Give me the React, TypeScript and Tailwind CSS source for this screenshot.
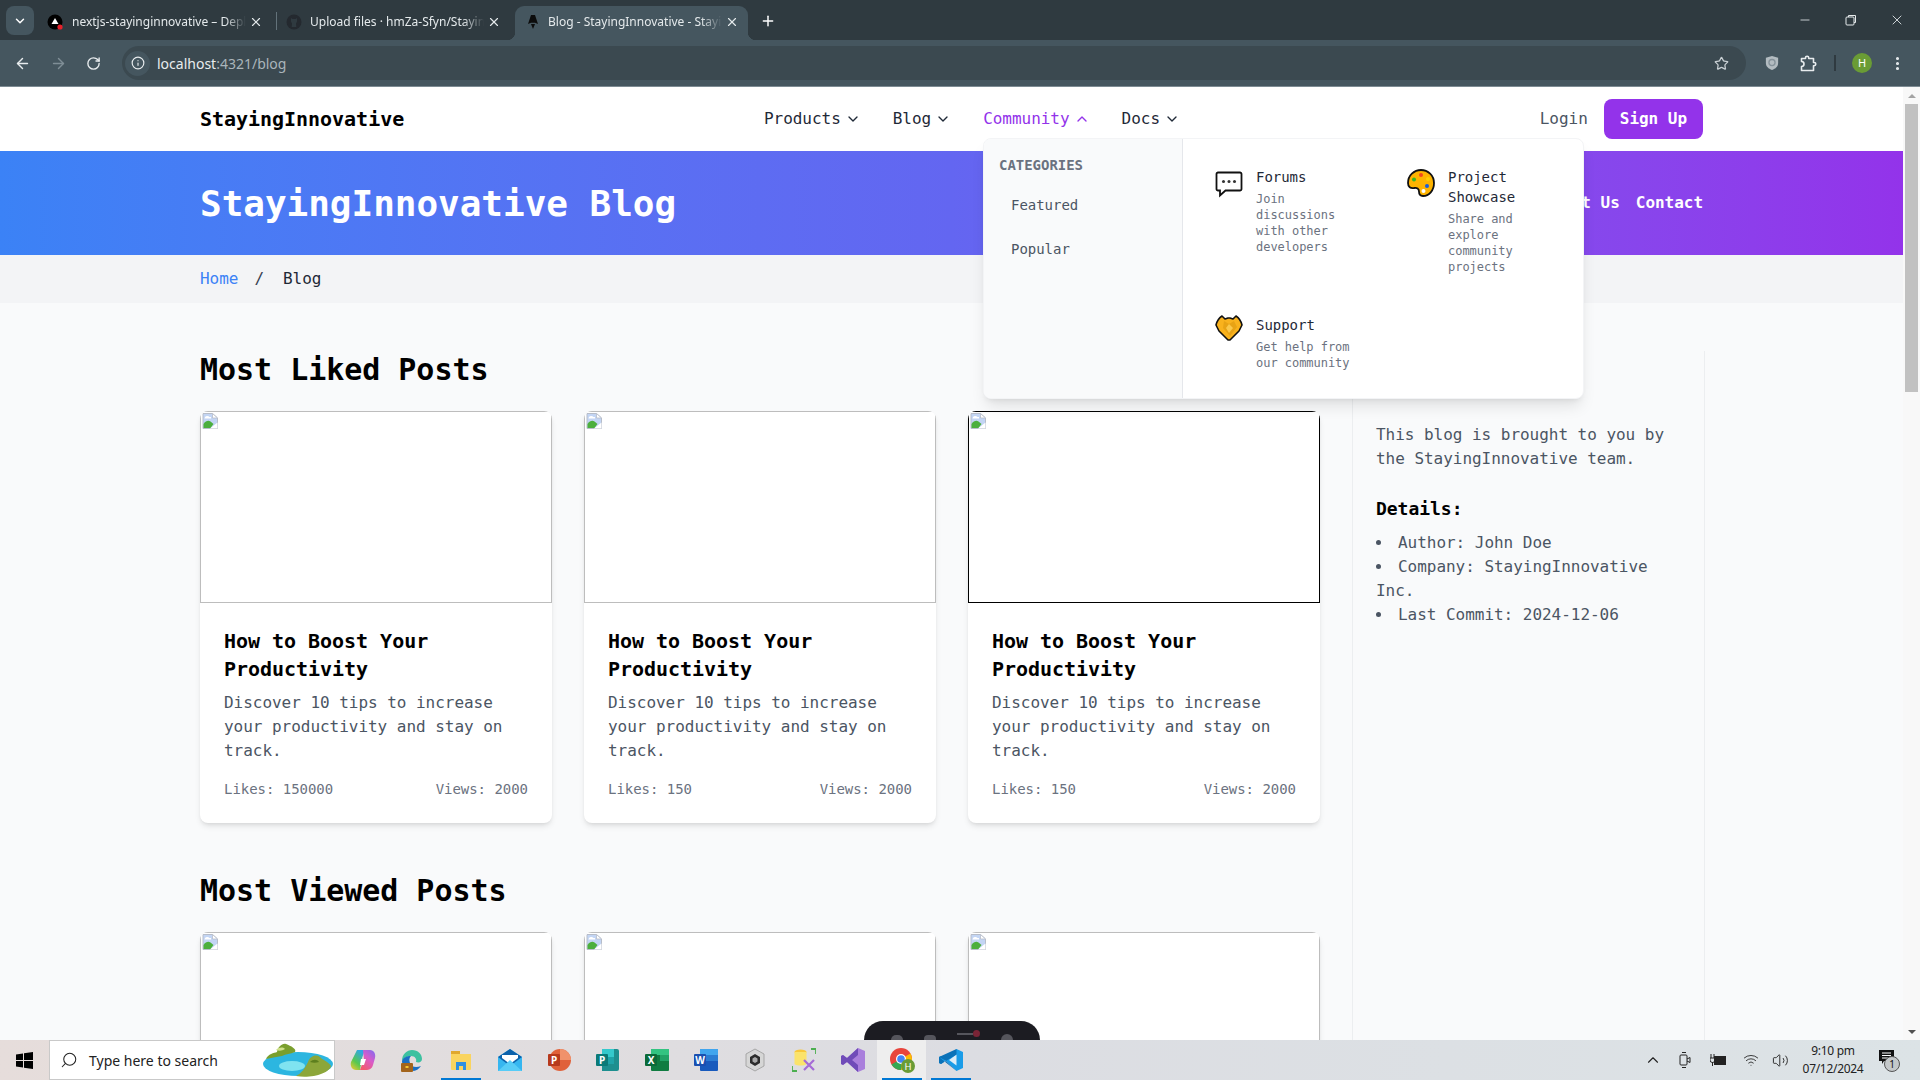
import React from "react";
import { ArrowLeft, ArrowRight, RotateCw, Info, Star, EllipsisVertical, ChevronDown, ChevronUp, Minus, X, Plus, Search, Volume2, Wifi } from "lucide-react";

const UI = "font-['Noto_Sans',sans-serif]";

function Tab({ w, pl, ml, pr, active, icon, title }: { w: string; pl: string; ml: string; pr: string; active?: boolean; icon: React.ReactNode; title: string }) {
  return (
    <div className={`relative h-[34px] pb-[3px] flex items-center ${w} ${pl} ${pr} ${active ? "bg-[#45565f] rounded-t-[9px]" : ""}`}>
      {icon}
      <div className={`${ml} flex-1 overflow-hidden whitespace-nowrap text-[12px] text-[#e4e9eb] [mask-image:linear-gradient(to_right,black_88%,transparent)]`}>{title}</div>
      <X size={14} className="text-[#e4e9eb] ml-[3px] mr-[1px] shrink-0" strokeWidth={2} />
      {active && <div className="absolute left-[-8px] bottom-0 w-2 h-2 bg-[radial-gradient(circle_at_0_0,transparent_8px,#45565f_8.5px)]" />}
      {active && <div className="absolute right-[-8px] bottom-0 w-2 h-2 bg-[radial-gradient(circle_at_100%_0,transparent_8px,#45565f_8.5px)]" />}
    </div>
  );
}

function BrowserChrome() {
  return (
    <div className={`${UI} shrink-0`}>
      <div className="h-[40px] bg-[#2f3a40] flex items-end">
        <div className="w-[28px] h-[29px] ml-[6px] mb-[5px] mr-[6px] rounded-lg bg-[#45565f] flex items-center justify-center">
          <ChevronDown size={14} className="text-white" strokeWidth={2.5} />
        </div>
        <Tab w="w-[236px]" pl="pl-[7px]" ml="ml-[9px]" pr="pr-[12px]" title="nextjs-stayinginnovative – Deployment" icon={
          <svg width="16" height="16" viewBox="0 0 16 16" className="shrink-0"><circle cx="8" cy="8" r="7.5" fill="#000" /><path d="M8 4l3.5 6h-7z" fill="#fff" /><circle cx="13" cy="13" r="2.6" fill="#e5212b" /></svg>
        } />
        <div className="w-px h-[18px] bg-[#63727a] mb-[10px]" />
        <Tab w="w-[238px]" pl="pl-[9px]" ml="ml-[8px]" pr="pr-[13px]" title="Upload files · hmZa-Sfyn/StayingInnovative" icon={
          <svg width="16" height="16" viewBox="0 0 16 16" className="shrink-0"><circle cx="8" cy="8" r="7.5" fill="#24292f" /><path d="M5 4l1.5 1h3L11 4v3.5l-1 2 .3 3.5H5.7L6 9.500l-1-2z" fill="#2f3a40" /></svg>
        } />
        <Tab active w="w-[233px]" pl="pl-[10px]" ml="ml-[7px]" pr="pr-[8px]" title="Blog - StayingInnovative - Staying" icon={
          <svg width="16" height="16" viewBox="0 0 16 16" className="shrink-0"><path d="M6 1h4l3 9-3-1.200H6L3 10z" fill="#0c0c0c" /><path d="M6 10h4l-2 5z" fill="#0c0c0c" /></svg>
        } />
        <Plus size={16} className="text-white ml-[12px] mb-[11px]" strokeWidth={2.2} />
        <div className="flex-1" />
        <div className="flex items-center h-full pb-[1px] text-[#e6eaec]">
          <div className="w-[46px] flex justify-center"><Minus size={14} strokeWidth={1.4} /></div>
          <div className="w-[46px] flex justify-center">
            <svg width="12" height="12" viewBox="0 0 12 12" fill="none" stroke="currentColor"><rect x="1" y="3" width="8" height="8" rx="1" /><path d="M3.500 3V1.500h7v7H9" /></svg>
          </div>
          <div className="w-[46px] flex justify-center"><X size={16} strokeWidth={1.3} /></div>
        </div>
      </div>
      <div className="h-[47px] bg-[#45565f] border-b border-[#7d8b93] flex items-center text-[#e8ecee]">
        <ArrowLeft size={17} className="ml-[14px]" strokeWidth={2} />
        <ArrowRight size={17} className="ml-[19px] text-[#7f8e96]" strokeWidth={2} />
        <RotateCw size={15} className="ml-[19px]" strokeWidth={2.2} />
        <div className="ml-[21px] w-[1624px] h-[34px] rounded-full bg-[#3b4950] flex items-center pl-[3px] pr-[17px]">
          <div className="w-[25px] h-[25px] rounded-full bg-[#45565f] flex items-center justify-center"><Info size={14} strokeWidth={2} /></div>
          <span className="ml-[7px] text-[14px] text-[#e8ecee]">localhost<span className="text-[#aab5bb]">:4321/blog</span></span>
          <div className="flex-1" />
          <Star size={15} className="text-[#c9d0d4]" strokeWidth={2} />
        </div>
        <svg width="14" height="16" viewBox="0 0 16 18" className="ml-[19px]"><path d="M8 1l7 2v6c0 4-3 6.500-7 8-4-1.500-7-4-7-8V3z" fill="#b3bcc1" /><circle cx="8" cy="8.500" r="3.500" fill="none" stroke="#85929a" strokeWidth="1.500" /></svg>
        <svg width="17" height="17" viewBox="0 0 17 17" fill="none" stroke="currentColor" strokeWidth="1.600" strokeLinejoin="round" className="ml-[21px]">
          <path d="M1.500 3.500h4V2.800a1.600 1.600 0 013.200 0v.7h4.800v4h.7a1.600 1.600 0 010 3.200h-.7v4.800h-12v-4a2.500 2.500 0 000-5z" />
        </svg>
        <div className="ml-[17px] w-[2px] h-[16px] bg-[#2f3a40]" />
        <div className="ml-[16px] w-5 h-5 rounded-full bg-[#6a9c35] flex items-center justify-center text-[11px] text-white">H</div>
        <EllipsisVertical size={17} className="ml-[17px]" strokeWidth={2.4} />
      </div>
    </div>
  );
}

function BrokenImg() {
  return (
    <svg width="16" height="16" viewBox="0 0 16 16" className="block m-px">
      <path d="M1 0.500h9.500L15.500 5v10.500H1z" fill="#c3d5f4" stroke="#b7bdc9" strokeWidth="1" />
      <path d="M10.500 .5V5h5z" fill="#fff" stroke="#b7bdc9" strokeWidth=".8" />
      <path d="M3 4c1-1.500 3.500-1.500 4.500 0H9v1.500H2.500z" fill="#fff" />
      <path d="M1.500 15V11c2-3 5-4 7-2.500l3 2.500-3 4z" fill="#4caf3d" />
      <path d="M8 15.500l7.500-6v6z" fill="#fff" />
    </svg>
  );
}

function Card({ likes, dark }: { likes: string; dark?: boolean }) {
  return (
    <div className="bg-white rounded-lg shadow-md overflow-hidden">
      <div className={`h-[192px] border ${dark ? "border-black" : "border-[#bdbdbd]"}`}>
        <BrokenImg />
      </div>
      <div className="p-6">
        <h3 className="text-[20px] leading-[28px] font-bold text-black mb-2">How to Boost Your Productivity</h3>
        <p className="text-[16px] leading-[24px] text-[#4b5563]">Discover 10 tips to increase your productivity and stay on track.</p>
        <div className="mt-4 flex justify-between text-[14px] leading-[20px] text-[#6b7280]">
          <span>Likes: {likes}</span>
          <span>Views: 2000</span>
        </div>
      </div>
    </div>
  );
}

function NavItem({ label, open }: { label: string; open?: boolean }) {
  return (
    <span className={`flex items-center ${open ? "text-[#9333ea]" : "text-[#1f2937]"}`}>
      {label}
      {open ? <ChevronUp size={16} className="ml-1" strokeWidth={2} /> : <ChevronDown size={16} className="ml-1" strokeWidth={2} />}
    </span>
  );
}

const BubbleIcon = (
  <svg width="28" height="28" viewBox="0 0 28 28" className="shrink-0 mt-[3px]">
    <path d="M3 2.500h22a1.500 1.500 0 011.500 1.500v15a1.500 1.500 0 01-1.500 1.500H10.500L5 25.500v-5H3A1.500 1.500 0 011.500 19V4A1.500 1.500 0 013 2.500z" fill="#fff" stroke="#111" strokeWidth="1.800" />
    <circle cx="8.500" cy="11.500" r="1.500" fill="#333" /><circle cx="14" cy="11.500" r="1.500" fill="#333" /><circle cx="19.500" cy="11.500" r="1.500" fill="#333" />
  </svg>
);
const PaletteIcon = (
  <svg width="28" height="28" viewBox="0 0 28 28" className="shrink-0 mt-[2px]">
    <path d="M14 1c7 0 13 5.500 13 13s-5 13-11 13c-3.500 0-4-2-4-4.500 0-3-2-4-5-3.500C3.500 19.500 1 18 1 14 1 6.500 7 1 14 1z" fill="#fdb300" stroke="#111" strokeWidth="1.800" />
    <circle cx="14" cy="6" r="2" fill="#f0491f" /><circle cx="7" cy="10.500" r="2" fill="#3cb521" /><circle cx="21" cy="10" r="2" fill="#fcd000" /><circle cx="20" cy="17" r="2" fill="#1a5fd9" /><circle cx="16.500" cy="22" r="2" fill="#fff" />
  </svg>
);
const HandsIcon = (
  <svg width="28" height="28" viewBox="0 0 28 28" className="shrink-0 mt-[-2px]">
    <path d="M7 3l3 3 3-1h2l3 1 3-3c3 2 5 5 6 9l-3 6-5 5-4 4h-2l-4-4-5-5-3-6c1-4 3-7 6-9z" fill="#f9b21d" stroke="#111" strokeWidth="1.600" strokeLinejoin="round" />
    <path d="M9 8l5 3 5-3 3 6-7 9-7-8z" fill="#e8a315" />
    <path d="M14 11l4 4-4 5-3-5z" fill="#fbc84a" />
  </svg>
);

function MenuCard({ icon, title, desc }: { icon: React.ReactNode; title: string; desc: string }) {
  return (
    <div className="p-4 flex">
      <div className="w-[41px] shrink-0">{icon}</div>
      <div className="flex-1">
        <div className="text-[14px] leading-[20px] text-[#1f2937]">{title}</div>
        <div className="mt-1 text-[12px] leading-[16px] text-[#6b7280]">{desc}</div>
      </div>
    </div>
  );
}

function Popover() {
  return (
    <div className="absolute left-[983px] top-[51px] w-[601px] h-[261px] bg-white rounded-lg shadow-lg border border-[#f3f4f6] flex overflow-hidden z-10">
      <div className="w-[200px] bg-[#f9fafb] border-r border-[#e5e7eb] px-[15px] py-4">
        <div className="text-[14px] leading-[20px] font-bold text-[#6b7280] uppercase">Categories</div>
        <div className="mt-2 text-[14px] leading-[20px] text-[#4b5563]">
          <div className="px-3 py-3">Featured</div>
          <div className="px-3 py-3">Popular</div>
        </div>
      </div>
      <div className="flex-1 px-4 py-3 grid grid-cols-[176px_176px] gap-x-4 gap-y-2 content-start">
        <MenuCard icon={BubbleIcon} title="Forums" desc="Join discussions with other developers" />
        <MenuCard icon={PaletteIcon} title="Project Showcase" desc="Share and explore community projects" />
        <MenuCard icon={HandsIcon} title="Support" desc="Get help from our community" />
      </div>
    </div>
  );
}

function WebPage() {
  return (
    <div className="w-[1903px] h-full overflow-hidden bg-[#f9fafb] font-['DejaVu_Sans_Mono',monospace] tracking-[-0.002em]">
      <nav className="relative h-[64px] bg-white px-[200px] flex items-center justify-between text-[16px]">
        <div className="text-[20px] font-bold text-black">StayingInnovative</div>
        <div className="flex items-center gap-8">
          <NavItem label="Products" />
          <NavItem label="Blog" />
          <NavItem label="Community" open />
          <NavItem label="Docs" />
        </div>
        <div className="flex items-center gap-4">
          <span className="text-[#4b5563]">Login</span>
          <span className="h-[40px] px-4 rounded-lg bg-[#9333ea] text-white font-bold flex items-center">Sign Up</span>
        </div>
        <Popover />
      </nav>
      <header className="h-[104px] px-[200px] flex items-center justify-between bg-gradient-to-r from-[#3b82f6] via-[#6366f1] to-[#9333ea] text-white">
        <h1 className="text-[36px] leading-[40px] h-[40px] pt-px font-bold">StayingInnovative Blog</h1>
        <div className="flex gap-4 text-[16px] font-bold">
          <span>Contact Us</span>
          <span>Contact</span>
        </div>
      </header>
      <div className="h-[48px] px-[200px] flex items-center bg-[#f3f4f6] text-[16px]">
        <span className="text-[#3b82f6]">Home</span>
        <span className="ml-[16px] mr-[19px] text-[#374151]">/</span>
        <span className="text-[#1f2937]">Blog</span>
      </div>
      <div className="px-[200px] py-12 flex gap-8">
        <main className="w-[1120px] shrink-0">
          <h2 className="text-[30px] leading-[36px] h-[36px] pt-px font-bold text-black mb-6">Most Liked Posts</h2>
          <div className="grid grid-cols-3 gap-8 mb-[49px]">
            <Card likes="150000" />
            <Card likes="150" />
            <Card likes="150" dark />
          </div>
          <h2 className="text-[30px] leading-[36px] h-[36px] pt-px font-bold text-black mb-6">Most Viewed Posts</h2>
          <div className="grid grid-cols-3 gap-8">
            <Card likes="150" />
            <Card likes="150" />
            <Card likes="150" />
          </div>
        </main>
        <aside className="w-[353px] shrink-0 border-l border-r border-[#eceef0] pl-[23px] pr-6 pt-[72px] h-[1000px] text-[16px] leading-[24px] text-[#4b5563]">
          <p>This blog is brought to you by the StayingInnovative team.</p>
          <h3 className="mt-6 text-[18px] leading-[28px] font-bold text-black">Details:</h3>
          <ul className="mt-2 list-disc list-inside">
            <li>Author: John Doe</li>
            <li>Company: StayingInnovative Inc.</li>
            <li>Last Commit: 2024-12-06</li>
          </ul>
        </aside>
      </div>
    </div>
  );
}

function Scrollbar() {
  return (
    <div className="w-[17px] h-full bg-[#f8f8f8] flex flex-col items-center">
      <div className="h-[17px] flex items-center justify-center">
        <div className="w-0 h-0 border-x-[4px] border-x-transparent border-b-[4px] border-b-[#a3a3a3]" />
      </div>
      <div className="w-[13px] h-[288px] bg-[#c1c1c1]" />
      <div className="flex-1" />
      <div className="h-[17px] flex items-center justify-center">
        <div className="w-0 h-0 border-x-[4px] border-x-transparent border-t-[4px] border-t-[#505050]" />
      </div>
    </div>
  );
}

function Slot({ children, active, bar }: { children: React.ReactNode; active?: boolean; bar?: boolean }) {
  return (
    <div className={`relative w-[49px] h-full flex items-center justify-center ${active ? "bg-[#eeeeee]" : ""}`}>
      {children}
      {bar && <div className="absolute bottom-0 left-[4.500px] right-[4.500px] h-[2px] bg-[#0078d4]" />}
    </div>
  );
}

function Taskbar() {
  return (
    <div className={`${UI} relative h-[40px] shrink-0 flex items-center bg-gradient-to-r from-[#e6dddb] via-[#dcdde2] to-[#dce3e6]`}>
      <div className="w-[49px] flex justify-center">
        <svg width="17" height="17" viewBox="0 0 17 17" fill="#000"><path d="M0 2.500L7 1.500v6.500H0zM8 1.300L17 0v8H8zM0 9h7v6.500L0 14.500zM8 9h9v8L8 15.700z" /></svg>
      </div>
      <div className="w-[286px] h-full bg-white border border-[#c9c9c9] flex items-center">
        <Search size={18} className="ml-[10px] -scale-x-100 text-[#222]" strokeWidth={1.400} />
        <span className="ml-[11px] text-[14px] text-[#222]">Type here to search</span>
        <svg width="74" height="36" viewBox="0 0 74 36" className="ml-auto">
          <ellipse cx="38" cy="22" rx="35" ry="12" fill="#2cb6e0" />
          <ellipse cx="32" cy="24" rx="13" ry="5" fill="#7fe3f0" />
          <path d="M6 17c2-5 8-6 11-7 1-5 5-9 9-8 5 2 11 5 9 8-5 2-9 2-13 4-6 1-11 2-16 3z" fill="#7a9f2e" />
          <path d="M16 8c3-3 7-3 9-1-3 2-6 2-9 1z" fill="#cfe08a" />
          <path d="M36 34c6-3 9-8 12-14 2-6 8-8 12-5 2 3 8 4 11 9-1 7-20 13-35 10z" fill="#8ca63a" />
          <path d="M50 20c3-3 7-3 9 0-3 1-6 1-9 0z" fill="#5d7f1e" />
        </svg>
      </div>
      <div className="ml-[3px] flex h-full">
        <Slot><svg width="26" height="26" viewBox="0 0 26 26"><defs><linearGradient id="cpa" x1="0" y1="1" x2=".6" y2="0"><stop offset="0" stopColor="#f9c92f" /><stop offset=".45" stopColor="#58c84f" /><stop offset="1" stopColor="#2fa7e6" /></linearGradient><linearGradient id="cpb" x1=".3" y1="1" x2="1" y2="0"><stop offset="0" stopColor="#f25a6e" /><stop offset=".5" stopColor="#d95bc9" /><stop offset="1" stopColor="#7c6cf2" /></linearGradient></defs><path d="M7 3h8l-3 8-2 12H6c-4 0-6-4-5-8z" fill="url(#cpa)" /><path d="M13 3h7c4 0 6 4 5 8l-2 7c-1 4-4 5-7 5h-6l4-11z" fill="url(#cpb)" /><path d="M11 12h5l-2 6h-4z" fill="#fff" /></svg></Slot>
        <Slot><svg width="24" height="24" viewBox="0 0 24 24"><path d="M2 13C2 6 7 2 12 2c6 0 10 4 10 9 0 3-3 4-6 3 1-3-1-6-5-6-4 0-7 2-9 5z" fill="#3dc1a0" /><path d="M2 13c0 6 5 10 10 10 4 0 7-2 9-5-5 2-10 1-11-3-1-3-1-5 1-7-5 0-8 2-9 5z" fill="#1a6fc4" /><rect x="1" y="15" width="12" height="9" rx="1" fill="#a3641c" /><rect x="5.500" y="18" width="3" height="2" fill="#f4c430" /></svg></Slot>
        <Slot bar><svg width="22" height="20" viewBox="0 0 22 20"><path d="M1 1h9v5H1z" fill="#e0a82e" /><path d="M1 4h20v15a1 1 0 01-1 1H2a1 1 0 01-1-1z" fill="#fad45f" /><path d="M6 12h10v8h-3v-4H9v4H6z" fill="#2f8fe0" /></svg></Slot>
        <Slot><svg width="24" height="22" viewBox="0 0 24 22"><path d="M0 8L12 0l12 8v14H0z" fill="#36b6f0" /><path d="M0 8L12 0l12 8-12 9z" fill="#0d62ab" /><path d="M4 6h16v3l-8 6-8-6z" fill="#fff" /><path d="M0 22l12-11 12 11z" fill="#57ccf7" /></svg></Slot>
        <Slot><svg width="24" height="24" viewBox="0 0 24 24"><circle cx="13" cy="12" r="11" fill="#e0613a" /><path d="M13 1a11 11 0 0111 11H13z" fill="#f0926b" /><rect x="1" y="6" width="12" height="12" rx="1" fill="#b7391d" /><text x="7" y="16" fontSize="10" fontWeight="700" fill="#fff" textAnchor="middle" fontFamily="Noto Sans">P</text></svg></Slot>
        <Slot><svg width="24" height="24" viewBox="0 0 24 24"><path d="M6 1h15a2 2 0 012 2v18a2 2 0 01-2 2H6z" fill="#1d8f8f" /><path d="M6 1h12v8H6z" fill="#35c9cc" /><path d="M6 9h12v7H6z" fill="#1fa3a8" /><rect x="0" y="6" width="12" height="12" rx="1" fill="#0a7a78" /><text x="6" y="16" fontSize="10" fontWeight="700" fill="#fff" textAnchor="middle" fontFamily="Noto Sans">P</text></svg></Slot>
        <Slot><svg width="24" height="24" viewBox="0 0 24 24"><rect x="6" y="1" width="18" height="22" rx="1" fill="#107c41" /><path d="M6 1h18v6H6z" fill="#33c481" /><path d="M15 7h9v6h-9z" fill="#21a366" /><rect x="0" y="6" width="12" height="12" rx="1" fill="#0b6a38" /><text x="6" y="16" fontSize="10" fontWeight="700" fill="#fff" textAnchor="middle" fontFamily="Noto Sans">X</text></svg></Slot>
        <Slot><svg width="24" height="24" viewBox="0 0 24 24"><rect x="6" y="1" width="18" height="22" rx="1" fill="#185abd" /><path d="M6 1h18v6H6z" fill="#41a5ee" /><path d="M6 7h18v6H6z" fill="#2b7cd3" /><rect x="0" y="6" width="12" height="12" rx="1" fill="#1a4fb0" /><text x="6" y="16" fontSize="10" fontWeight="700" fill="#fff" textAnchor="middle" fontFamily="Noto Sans">W</text></svg></Slot>
        <Slot><svg width="20" height="24" viewBox="0 0 20 24"><path d="M10 1l9 5v12l-9 5-9-5V6z" fill="#d6d6d6" stroke="#999" strokeWidth=".8" /><path d="M10 6l5 3v6l-5 3-5-3V9z" fill="#2c2c2c" /><path d="M10 9l2.500 1.500v3L10 15l-2.500-1.500v-3z" fill="#aaa" /></svg></Slot>
        <Slot><svg width="24" height="24" viewBox="0 0 24 24"><ellipse cx="8.500" cy="4" rx="6" ry="2.500" fill="#f8c83a" /><path d="M2.500 4h12v12c-2 2-10 2-12 0z" fill="#fbe36b" /><path d="M0 23v-5M0 23h5M24 1h-5M24 1v5" stroke="#4caf50" strokeWidth="1.800" fill="none" /><path d="M12 22l10-10M12 12l10 10" stroke="#a56bd6" strokeWidth="2.200" /></svg></Slot>
        <Slot><svg width="24" height="24" viewBox="0 0 24 24"><path d="M17 0l7 3v18l-7 3L6 14l-4 3-2-1V8l2-1 4 3z" fill="#a97fdc" /><path d="M17 0v24L6 14l-4 3-2-1V8l2-1 4 3zM17 7l-6 5 6 5z" fill="#6f4bb8" fillRule="evenodd" /></svg></Slot>
        <Slot active bar>
          <svg width="26" height="26" viewBox="0 0 26 26"><circle cx="12" cy="12" r="11" fill="#e8453c" /><path d="M12 12L2.500 17.500A11 11 0 0012 23z" fill="#34a853" /><path d="M12 12l9.500-5.500A11 11 0 0123 12c0 6-5 11-11 11z" fill="#fbbc05" /><circle cx="12" cy="12" r="5" fill="#fff" /><circle cx="12" cy="12" r="3.800" fill="#4285f4" /><circle cx="19" cy="19" r="7" fill="#6a9c35" /><text x="19" y="22.500" fontSize="9.500" fill="#fff" textAnchor="middle" fontFamily="Noto Sans">H</text></svg>
        </Slot>
        <Slot bar><svg width="24" height="24" viewBox="0 0 24 24"><path d="M17.500 1L24 4v16l-6.500 3-11-10.500L2 16l-2-1V9l2-1 4.500 3.500z" fill="#1a9ce8" /><path d="M17.500 6.500L10 12l7.500 5.500z" fill="#f4f6f8" fillOpacity=".9" /><path d="M17.500 1v5.500L2 16l-2-1V9zM0 9l17.500 14-11-10.500z" fill="#0b72b8" /></svg></Slot>
      </div>
      <div className="flex-1" />
      <div className="flex items-center text-[#222] pr-[23px]">
        <ChevronUp size={18} strokeWidth={1.500} />
        <svg width="12" height="18" viewBox="0 0 12 18" fill="none" stroke="#222" strokeWidth="1" className="ml-[17px]"><rect x="1" y="4" width="7" height="10" rx="1" /><path d="M8 8l3-1.500v5L8 10M3 1.500h4M3 16.500h4" /></svg>
        <svg width="16" height="14" viewBox="0 0 16 14" className="ml-[19px]"><rect x="4" y="3" width="12" height="9" fill="#222" /><path d="M1 1v4M4 1v4M0 5h5v2a2 2 0 01-5 0zM2.500 9v4" stroke="#222" strokeWidth="1" fill="none" /></svg>
        <Wifi size={16} strokeWidth={1.300} className="ml-[17px]" />
        <Volume2 size={17} strokeWidth={1.300} className="ml-[13px]" />
        <div className="ml-[12px] w-[64px] text-[12px] leading-[18px] text-center text-[#222] tracking-[-0.3px]">
          <div>9:10 pm</div>
          <div>07/12/2024</div>
        </div>
        <div className="relative ml-[14px] w-[18px] h-[24px]">
          <svg width="15" height="14" viewBox="0 0 15 14" className="absolute left-0 top-[2px]"><path d="M0 0h15v11H5l-2 3v-3H0z" fill="#111" /><path d="M3 3h9M3 5.500h9M3 8h9" stroke="#fff" /></svg>
          <div className="absolute left-[5px] top-[8px] w-[16px] h-[16px] rounded-full bg-[#c4c8ca] border border-[#555] text-[10px] leading-[14px] text-center text-[#111]">1</div>
        </div>
      </div>
    </div>
  );
}

export default function App() {
  return (
    <div className="w-[1920px] h-[1080px] overflow-hidden flex flex-col bg-white">
      <BrowserChrome />
      <div className="relative flex-1 min-h-0 flex">
        <WebPage />
        <Scrollbar />
        <div className="absolute left-[864px] bottom-0 w-[176px] h-[19px] bg-[#1c1c22] rounded-t-[20px] flex items-end justify-around px-4 text-[#55555c]">
          <div className="w-3 h-[5px] bg-[#55555c] rounded-t-full" />
          <div className="w-3 h-[5px] bg-[#55555c] rounded-t-sm" />
          <div className="flex items-center mb-[3px]"><div className="w-4 h-[2px] bg-[#55555c]" /><div className="w-[7px] h-[7px] rounded-full bg-[#7a2436]" /></div>
          <div className="w-3 h-[6px] bg-[#55555c] rounded-t-full" />
        </div>
      </div>
      <Taskbar />
    </div>
  );
}
